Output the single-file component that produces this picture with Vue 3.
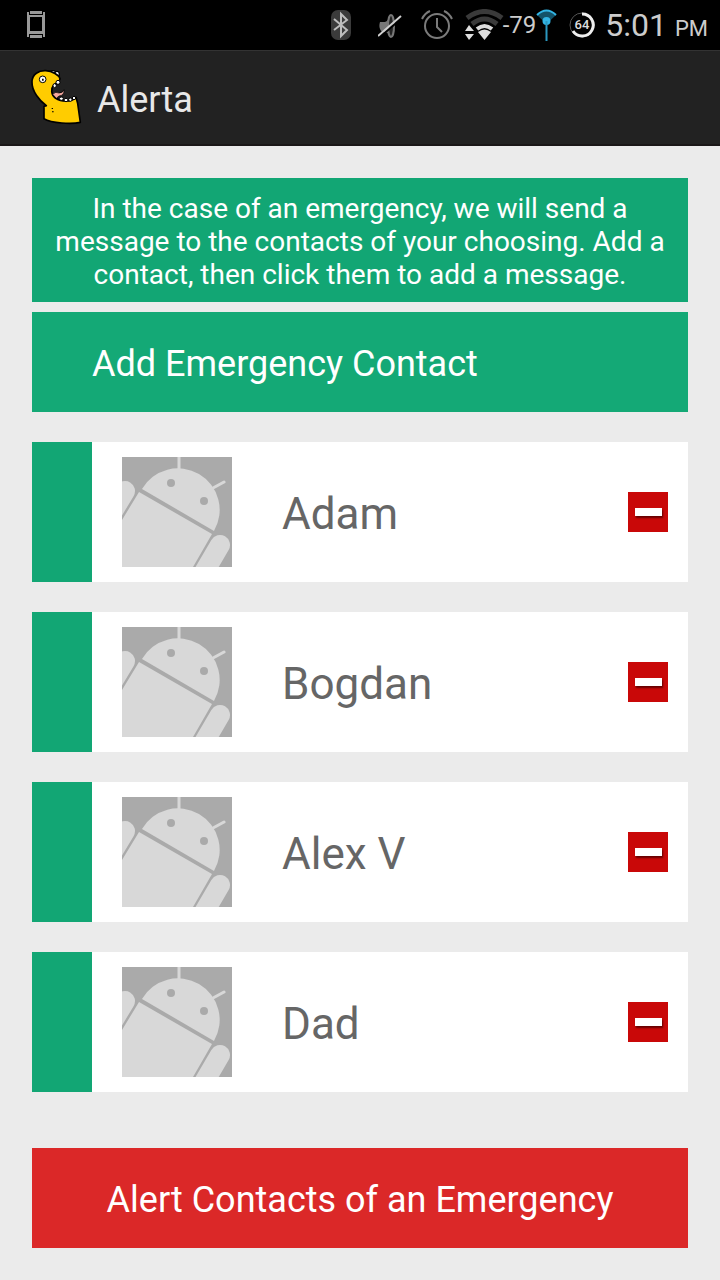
<script setup>
import { ref } from 'vue'

const contacts = ref(['Adam', 'Bogdan', 'Alex V', 'Dad'])

function removeContact(name) {
  contacts.value = contacts.value.filter((c) => c !== name)
}
</script>

<template>
  <div class="screen">
    <div class="status">
      <svg class="device" width="18" height="30" viewBox="0 0 18 30" aria-hidden="true">
        <path d="M3 1h12v3H3zM3 25h12v3H3z" fill="#999" />
        <path fill-rule="evenodd" d="M0 2h2v3h14V2h2v25h-2v-3H2v3H0zM3 7v14h12V7z" fill="#999" />
      </svg>
      <svg class="bluetooth" width="20" height="30" viewBox="0 0 20 30" aria-hidden="true">
        <rect width="20" height="30" rx="7" fill="#3b3b3b" />
        <path d="M3 9l13 11-6 6V4l6 6L3 20" fill="none" stroke="#bdbdbd" stroke-width="2" />
      </svg>
      <svg class="mute" width="24" height="30" viewBox="0 0 24 30" aria-hidden="true">
        <path d="M2 12h5c3-1 4-4 6-8v24c-2-4-3-5-6-6H4c-3-3-3-7-2-10z" fill="#777" />
        <ellipse cx="13" cy="16" rx="3" ry="11" fill="#222" stroke="#777" stroke-width="2" />
        <path d="M2 27L24 8" stroke="#000" stroke-width="2" />
        <path d="M0 26L23 6" stroke="#d0d0d0" stroke-width="2" />
      </svg>
      <svg class="alarm" width="32" height="30" viewBox="0 0 32 30" aria-hidden="true">
        <g fill="none" stroke="#7b7b7b" stroke-width="2">
          <circle cx="16" cy="16" r="12" />
          <path d="M16 8v9l5 5M1 9Q4 3 9 1M23 1q5 2 8 8" />
        </g>
      </svg>
      <svg class="wifi" width="39" height="32" viewBox="0 0 39 32" aria-hidden="true">
        <g fill="none">
          <path d="M2 9Q19.500-4 37 9" stroke="#3a3a3a" stroke-width="5" />
          <path d="M7 15Q19.500 5 32 15" stroke="#3a3a3a" stroke-width="5" />
          <path d="M12 20Q19.500 14 27 20" stroke="#ddd" stroke-width="4" />
        </g>
        <path d="M13 23q6.500-5 13 0l-6.500 8z" fill="#ddd" />
        <path d="M0 22l4-6 5 6zM0 25h9l-5 6z" fill="#ddd" />
      </svg>
      <span class="signal">-79</span>
      <svg class="antenna" width="21" height="32" viewBox="0 0 21 32" aria-hidden="true">
        <path d="M1 6Q10.500-3 20 6l-9.500 9z" fill="#145369" />
        <path d="M1 6Q10.500-3 20 6" fill="none" stroke="#33b5e5" stroke-width="2" />
        <circle cx="10.500" cy="12" r="4" fill="#33b5e5" />
        <path d="M10.500 12v20" stroke="#2b98c0" stroke-width="2" />
      </svg>
      <svg class="battery" width="26" height="26" viewBox="0 0 26 26" aria-hidden="true">
        <circle cx="13" cy="13" r="12" fill="none" stroke="#555" stroke-width="1" />
        <path d="M13 2a11 11 0 1 1-9 17" fill="none" stroke="#eee" stroke-width="3" />
        <text x="13" y="17" text-anchor="middle" font-size="13" font-weight="500" fill="#ddd">64</text>
      </svg>
      <time class="clock">5:01 <small>PM</small></time>
    </div>

    <header class="bar">
      <svg width="65" height="66" viewBox="0 0 195 198" aria-hidden="true">
        <g stroke="#000" stroke-linejoin="round">
          <ellipse cx="84" cy="32" rx="8" ry="6" fill="#fff" stroke-width="4" />
          <ellipse cx="96" cy="36" rx="7" ry="8" fill="#fff" stroke-width="4" />
          <path
            d="M64 131C44 116 20 88 21 60C21 36 42 25 62 26C82 27 102 39 105 50C105 58 96 62 86 69C77 80 78 98 91 108C109 120 138 122 153 106L158 124L166 181C140 187 80 184 57 170V133Z"
            fill="#fc0" stroke-width="5"
          />
          <path d="M83 97q9-10 19-4 12 0 15-10 2 17-15 19l-8 7z" fill="#f5a9a0" stroke-width="2" />
          <g fill="#fff" stroke-width="3">
            <ellipse cx="99" cy="61" rx="6" ry="6" />
            <ellipse cx="89" cy="71" rx="5" ry="6" />
            <ellipse cx="109" cy="110" rx="6" ry="5" />
            <ellipse cx="123" cy="114" rx="6" ry="5" />
            <ellipse cx="136" cy="113" rx="5" ry="5" />
            <ellipse cx="147" cy="108" rx="5" ry="5" />
          </g>
          <circle cx="53" cy="52" r="10" fill="#fff" stroke-width="3" />
        </g>
        <path d="M51 50h5v6h-5zM80 138h4v3h-4zM81 148h5v3h-5zM87 31h4v4h-4z" />
      </svg>
      <h1>Alerta</h1>
    </header>

    <main>
      <p class="info">
        In the case of an emergency, we will send a message to the contacts of your choosing. Add a
        contact, then click them to add a message.
      </p>
      <button class="add" type="button">Add Emergency Contact</button>

      <ul class="contacts">
        <li v-for="name in contacts" :key="name">
          <button class="contact" type="button">
            <svg class="avatar" width="110" height="110" viewBox="0 0 110 110" aria-hidden="true">
              <rect width="110" height="110" fill="#aaa" />
              <g stroke="#d8d8d8" stroke-linecap="round">
                <path d="M57 0v14M91 31l11-6" stroke-width="3" />
                <path d="M3 34l-24 40M98 88l-24 41" stroke-width="20" />
              </g>
              <path d="M20 32A41 41 0 0 1 92 74ZM17 35L90 77L71 110H0V63Z" fill="#d8d8d8" />
              <circle cx="49" cy="26" r="4" fill="#aaa" />
              <circle cx="82" cy="44" r="4" fill="#aaa" />
            </svg>
            <span class="name">{{ name }}</span>
          </button>
          <button class="remove" type="button" :aria-label="`Remove ${name}`" @click="removeContact(name)">
            <span class="minus"></span>
          </button>
        </li>
      </ul>

      <button class="alert" type="button">Alert Contacts of an Emergency</button>
    </main>
  </div>
</template>

<style>
body {
  margin: 0;
  background: #ebebeb;
}
</style>

<style scoped>
.screen {
  display: flex;
  flex-direction: column;
  min-height: 100vh;
  background: #ebebeb;
  font-family: Roboto, 'Liberation Sans', sans-serif;
}
svg {
  display: block;
  flex: none;
}
button {
  border: 0;
  font: inherit;
  cursor: pointer;
}
.status {
  display: flex;
  align-items: center;
  height: 50px;
  padding: 0 12px 0 27px;
  background: #000;
  color: #ccc;
  white-space: nowrap;
}
.bluetooth {
  margin-left: auto;
}
.mute {
  margin-left: 27px;
}
.alarm {
  margin-left: 19px;
}
.wifi {
  margin-left: 12px;
}
.signal {
  margin-left: -1px;
  font-size: 24px;
}
.battery {
  margin-left: 12px;
}
.clock {
  margin-left: 10px;
  font-size: 32px;
}
.clock small {
  font-size: 22px;
}
.bar {
  display: flex;
  align-items: center;
  gap: 7px;
  box-sizing: border-box;
  height: 96px;
  padding: 0 25px 5px;
  border-top: 1px solid #333;
  border-bottom: 2px solid #1a1718;
  background: #222;
}
h1 {
  margin: 0;
  padding-top: 9px;
  color: #e8e8e8;
  font-size: 36px;
  font-weight: 400;
}
main {
  display: flex;
  flex: 1;
  flex-direction: column;
  padding: 32px;
}
.info {
  margin: 0 0 10px;
  padding: 14px 16px 11px;
  background: #12a674;
  color: #fff;
  font-size: 28px;
  line-height: 33px;
  text-align: center;
}
.add,
.alert {
  min-height: 100px;
  color: #fff;
  font-size: 36px;
}
.add {
  padding: 4px 60px 0;
  background: #14a976;
  text-align: left;
}
.contacts {
  display: flex;
  flex-direction: column;
  gap: 30px;
  margin: 30px 0;
  padding: 0;
  list-style: none;
}
.contacts li {
  display: flex;
  align-items: center;
  padding-right: 20px;
  border-left: 60px solid #12a674;
  background: #fff;
}
.contact {
  display: flex;
  flex: 1;
  align-items: center;
  gap: 50px;
  padding: 15px 30px;
  background: none;
  color: #666;
  font-size: 44px;
  text-align: left;
}
.name {
  padding-top: 4px;
}
.remove {
  display: flex;
  align-items: center;
  justify-content: center;
  width: 40px;
  height: 40px;
  padding: 0;
  background: #c90808;
}
.minus {
  width: 27px;
  height: 8px;
  background: #fff;
  box-shadow: 1px 2px 2px #600;
}
.alert {
  margin-top: auto;
  padding: 4px 20px 0;
  background: #db2828;
}
</style>
